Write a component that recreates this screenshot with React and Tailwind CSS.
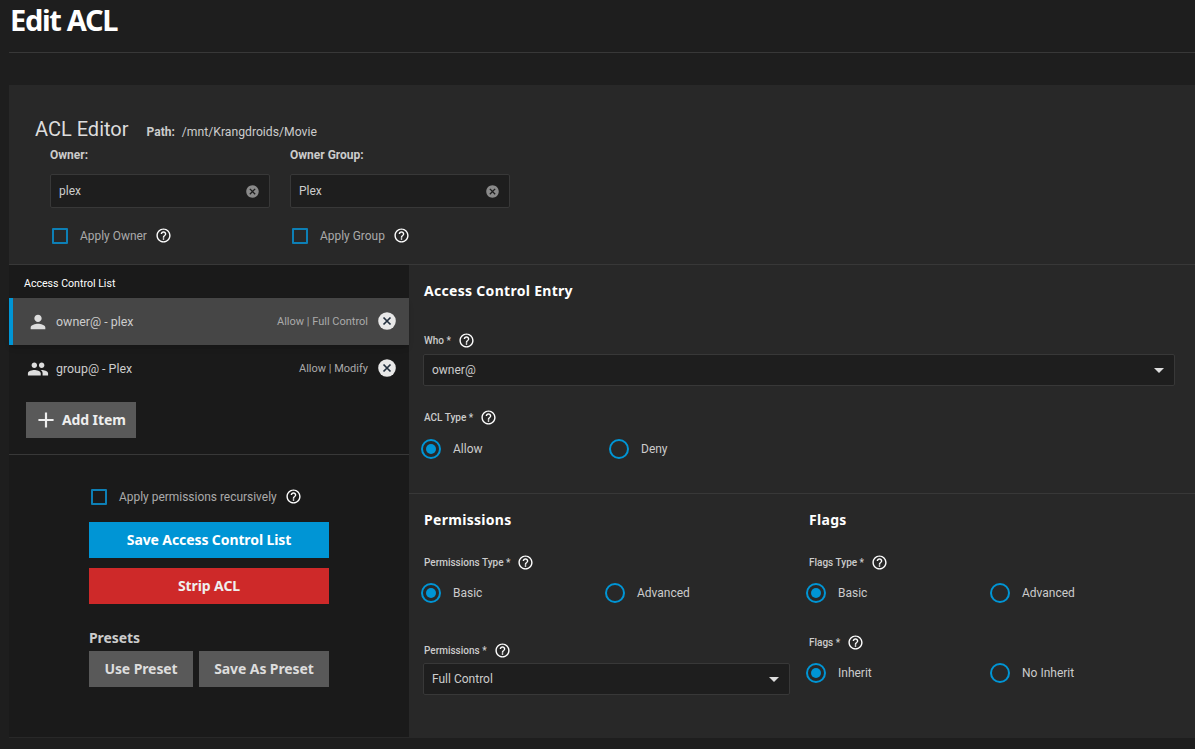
import { MdAdd, MdArrowDropDown, MdCancel, MdHelpOutline, MdPeople, MdPerson } from 'react-icons/md'

function Help({ className = '' }) {
  return <MdHelpOutline className={`text-white text-[17px] ${className}`} />
}

function Clear() {
  return <MdCancel className="text-[#8a8a8a] text-[15px]" />
}

function Remove() {
  return (
    <svg viewBox="0 0 18 18" className="w-[18px] h-[18px] -mt-[2px] shrink-0">
      <circle cx="9" cy="9" r="8.8" fill="#e8e8e8" />
      <path d="M5.5 5.5l7 7M12.5 5.5l-7 7" stroke="#23303f" strokeWidth="1.7" />
    </svg>
  )
}

function Checkbox({ label, className = '' }) {
  return (
    <div className={`flex items-center ${className}`}>
      <span className="w-4 h-4 border-2 border-[#0d7fb5] rounded-[1px]" />
      <span className="ml-3 text-[#aaaaaa] text-[11.95px] leading-4">{label}</span>
      <Help className="ml-2" />
    </div>
  )
}

function TextField({ value }) {
  return (
    <div className="mt-[10px] w-[220px] h-[34px] bg-[#1e1e1e] border border-[#383838] rounded-[2px] flex items-center justify-between pl-2 pr-[9px] text-[#cccccc] text-xs">
      {value}
      <Clear />
    </div>
  )
}

function Select({ value }) {
  return (
    <div className="h-8 bg-[#1e1e1e] border border-[#383838] rounded-[2px] flex items-center justify-between pl-2 pr-[3px] text-[#cccccc] text-xs">
      {value}
      <MdArrowDropDown className="text-[#dddddd] text-2xl" />
    </div>
  )
}

function FieldLabel({ text }) {
  return (
    <div className="flex items-center h-[18px] pl-px text-[#cccccc] text-[10px] font-medium">
      <span>{text} *</span>
      <Help className="ml-[7px]" />
    </div>
  )
}

function Radio({ label, checked, className = '' }) {
  return (
    <div className={`flex items-center ${className}`}>
      <span className="w-5 h-5 rounded-full border-2 border-[#0095d5] flex items-center justify-center">
        {checked && <span className="w-[10px] h-[10px] rounded-full bg-[#0095d5]" />}
      </span>
      <span className="ml-[12px] text-[#cccccc] text-xs">{label}</span>
    </div>
  )
}

function SectionTitle({ children }) {
  return <h3 className="pl-px font-['Noto_Sans',sans-serif] font-bold text-white text-sm leading-5 tracking-[0.3px]">{children}</h3>
}

function AclRow({ icon, who, info, active }) {
  return (
    <div className={`h-[47px] flex items-center pr-[13px] ${active ? 'bg-[#464646] border-l-[4px] border-[#0095d5] pl-[14px] shadow-md' : 'pl-[18px]'}`}>
      <span className="w-[29px] text-[#dddddd] text-[22px]">{icon}</span>
      <span className="mt-px text-[#cccccc] text-[12.4px] leading-4">{who}</span>
      <span className="ml-auto mr-[10px] mt-px text-[#aaaaaa] text-[11px] leading-4">{info}</span>
      <Remove />
    </div>
  )
}

function GrayButton({ children, className = '' }) {
  return (
    <button className={`h-9 bg-[#595959] text-[#dddddd] text-sm font-bold tracking-[-0.1px] font-['Noto_Sans',sans-serif] ${className}`}>
      {children}
    </button>
  )
}

export default function App() {
  return (
    <div className="min-h-[749px] bg-[#1e1e1e] pl-[9px] font-['Roboto',sans-serif] overflow-hidden">
      {/* Page title */}
      <div className="h-[53px] border-b border-[#383838]">
        <h1 className="pl-px text-white text-[29px] leading-[40px] font-bold tracking-[-1.3px] font-['Noto_Sans',sans-serif]">Edit ACL</h1>
      </div>

      <div className="mt-8 h-[653px] bg-[#282828] flex flex-col">
        {/* Owner header */}
        <div className="h-[180px] border-b border-[#383838] pt-[30px]">
          <div className="flex items-baseline pl-[26px]">
            <h2 className="text-[#dddddd] text-xl">ACL Editor</h2>
            <span className="ml-[18px] text-[#cccccc] text-xs font-bold">Path:</span>
            <span className="ml-[7px] text-[#cccccc] text-[12.2px]">/mnt/Krangdroids/Movie</span>
          </div>
          <div className="flex gap-5 pl-[41px] mt-1">
            <div className="w-[220px]">
              <div className="text-[#cccccc] text-xs font-bold leading-[17px]">Owner:</div>
              <TextField value="plex" />
              <Checkbox label="Apply Owner" className="mt-[19px] ml-[2px]" />
            </div>
            <div className="w-[220px]">
              <div className="text-[#cccccc] text-xs font-bold leading-[17px]">Owner Group:</div>
              <TextField value="Plex" />
              <Checkbox label="Apply Group" className="mt-[19px] ml-[2px]" />
            </div>
          </div>
        </div>

        <div className="flex-1 flex">
          {/* Left column: entries and actions */}
          <aside className="w-[400px] h-[472px] bg-[#1a1a1a]">
            <div className="h-[190px] border-b border-[#383838]">
              <div className="h-[33px] pl-[15px] pt-1 flex items-center text-white text-[10.6px]">Access Control List</div>
              <AclRow icon={<MdPerson />} who="owner@ - plex" info="Allow | Full Control" active />
              <AclRow icon={<MdPeople />} who="group@ - Plex" info="Allow | Modify" />
              <button className="ml-[17px] mt-[10px] w-[110px] h-9 bg-[#595959] flex items-center pl-[7px] text-[#eeeeee] text-sm font-bold tracking-[-0.1px] font-['Noto_Sans',sans-serif]">
                <MdAdd className="text-[26px] mr-[3px]" />
                Add Item
              </button>
            </div>
            <div className="pl-[80px] pt-[33px] w-[320px]">
              <Checkbox label="Apply permissions recursively" className="ml-[2px]" />
              <button className="mt-[17px] w-full h-9 bg-[#0095d5] text-white text-sm font-bold tracking-[-0.1px] font-['Noto_Sans',sans-serif]">
                Save Access Control List
              </button>
              <button className="mt-[10px] w-full h-9 bg-[#ce2929] text-[#eeeeee] text-sm font-bold tracking-[-0.1px] font-['Noto_Sans',sans-serif]">
                Strip ACL
              </button>
              <div className="mt-6 text-[#cccccc] text-sm font-bold leading-[20px] tracking-[-0.1px] font-['Noto_Sans',sans-serif]">Presets</div>
              <div className="flex gap-[6px] mt-[3px]">
                <GrayButton className="w-[104px]">Use Preset</GrayButton>
                <GrayButton className="w-[130px]">Save As Preset</GrayButton>
              </div>
            </div>
          </aside>

          {/* Right column: entry form */}
          <section className="flex-1">
            <div className="h-[229px] border-b border-[#383838] pl-[14px] pr-5 pt-4">
              <SectionTitle>Access Control Entry</SectionTitle>
              <div className="mt-[30px]"><FieldLabel text="Who" /></div>
              <div className="mt-[5px]"><Select value="owner@" /></div>
              <div className="mt-[22px]"><FieldLabel text="ACL Type" /></div>
              <div className="flex mt-[13px] -ml-[2px]">
                <Radio label="Allow" checked className="w-[188px]" />
                <Radio label="Deny" />
              </div>
            </div>

            <div className="flex pt-4 pl-[14px]">
              <div className="w-[367px]">
                <SectionTitle>Permissions</SectionTitle>
                <div className="mt-[23px]"><FieldLabel text="Permissions Type" /></div>
                <div className="flex mt-[12px] -ml-[2px]">
                  <Radio label="Basic" checked className="w-[184px]" />
                  <Radio label="Advanced" />
                </div>
                <div className="mt-[38px]"><FieldLabel text="Permissions" /></div>
                <div className="mt-[4px]"><Select value="Full Control" /></div>
              </div>
              <div className="ml-[18px]">
                <SectionTitle>Flags</SectionTitle>
                <div className="mt-[23px]"><FieldLabel text="Flags Type" /></div>
                <div className="flex mt-[12px] -ml-[2px]">
                  <Radio label="Basic" checked className="w-[184px]" />
                  <Radio label="Advanced" />
                </div>
                <div className="mt-[30px]"><FieldLabel text="Flags" /></div>
                <div className="flex mt-[12px] -ml-[2px]">
                  <Radio label="Inherit" checked className="w-[184px]" />
                  <Radio label="No Inherit" />
                </div>
              </div>
            </div>
          </section>
        </div>
      </div>
    </div>
  )
}
